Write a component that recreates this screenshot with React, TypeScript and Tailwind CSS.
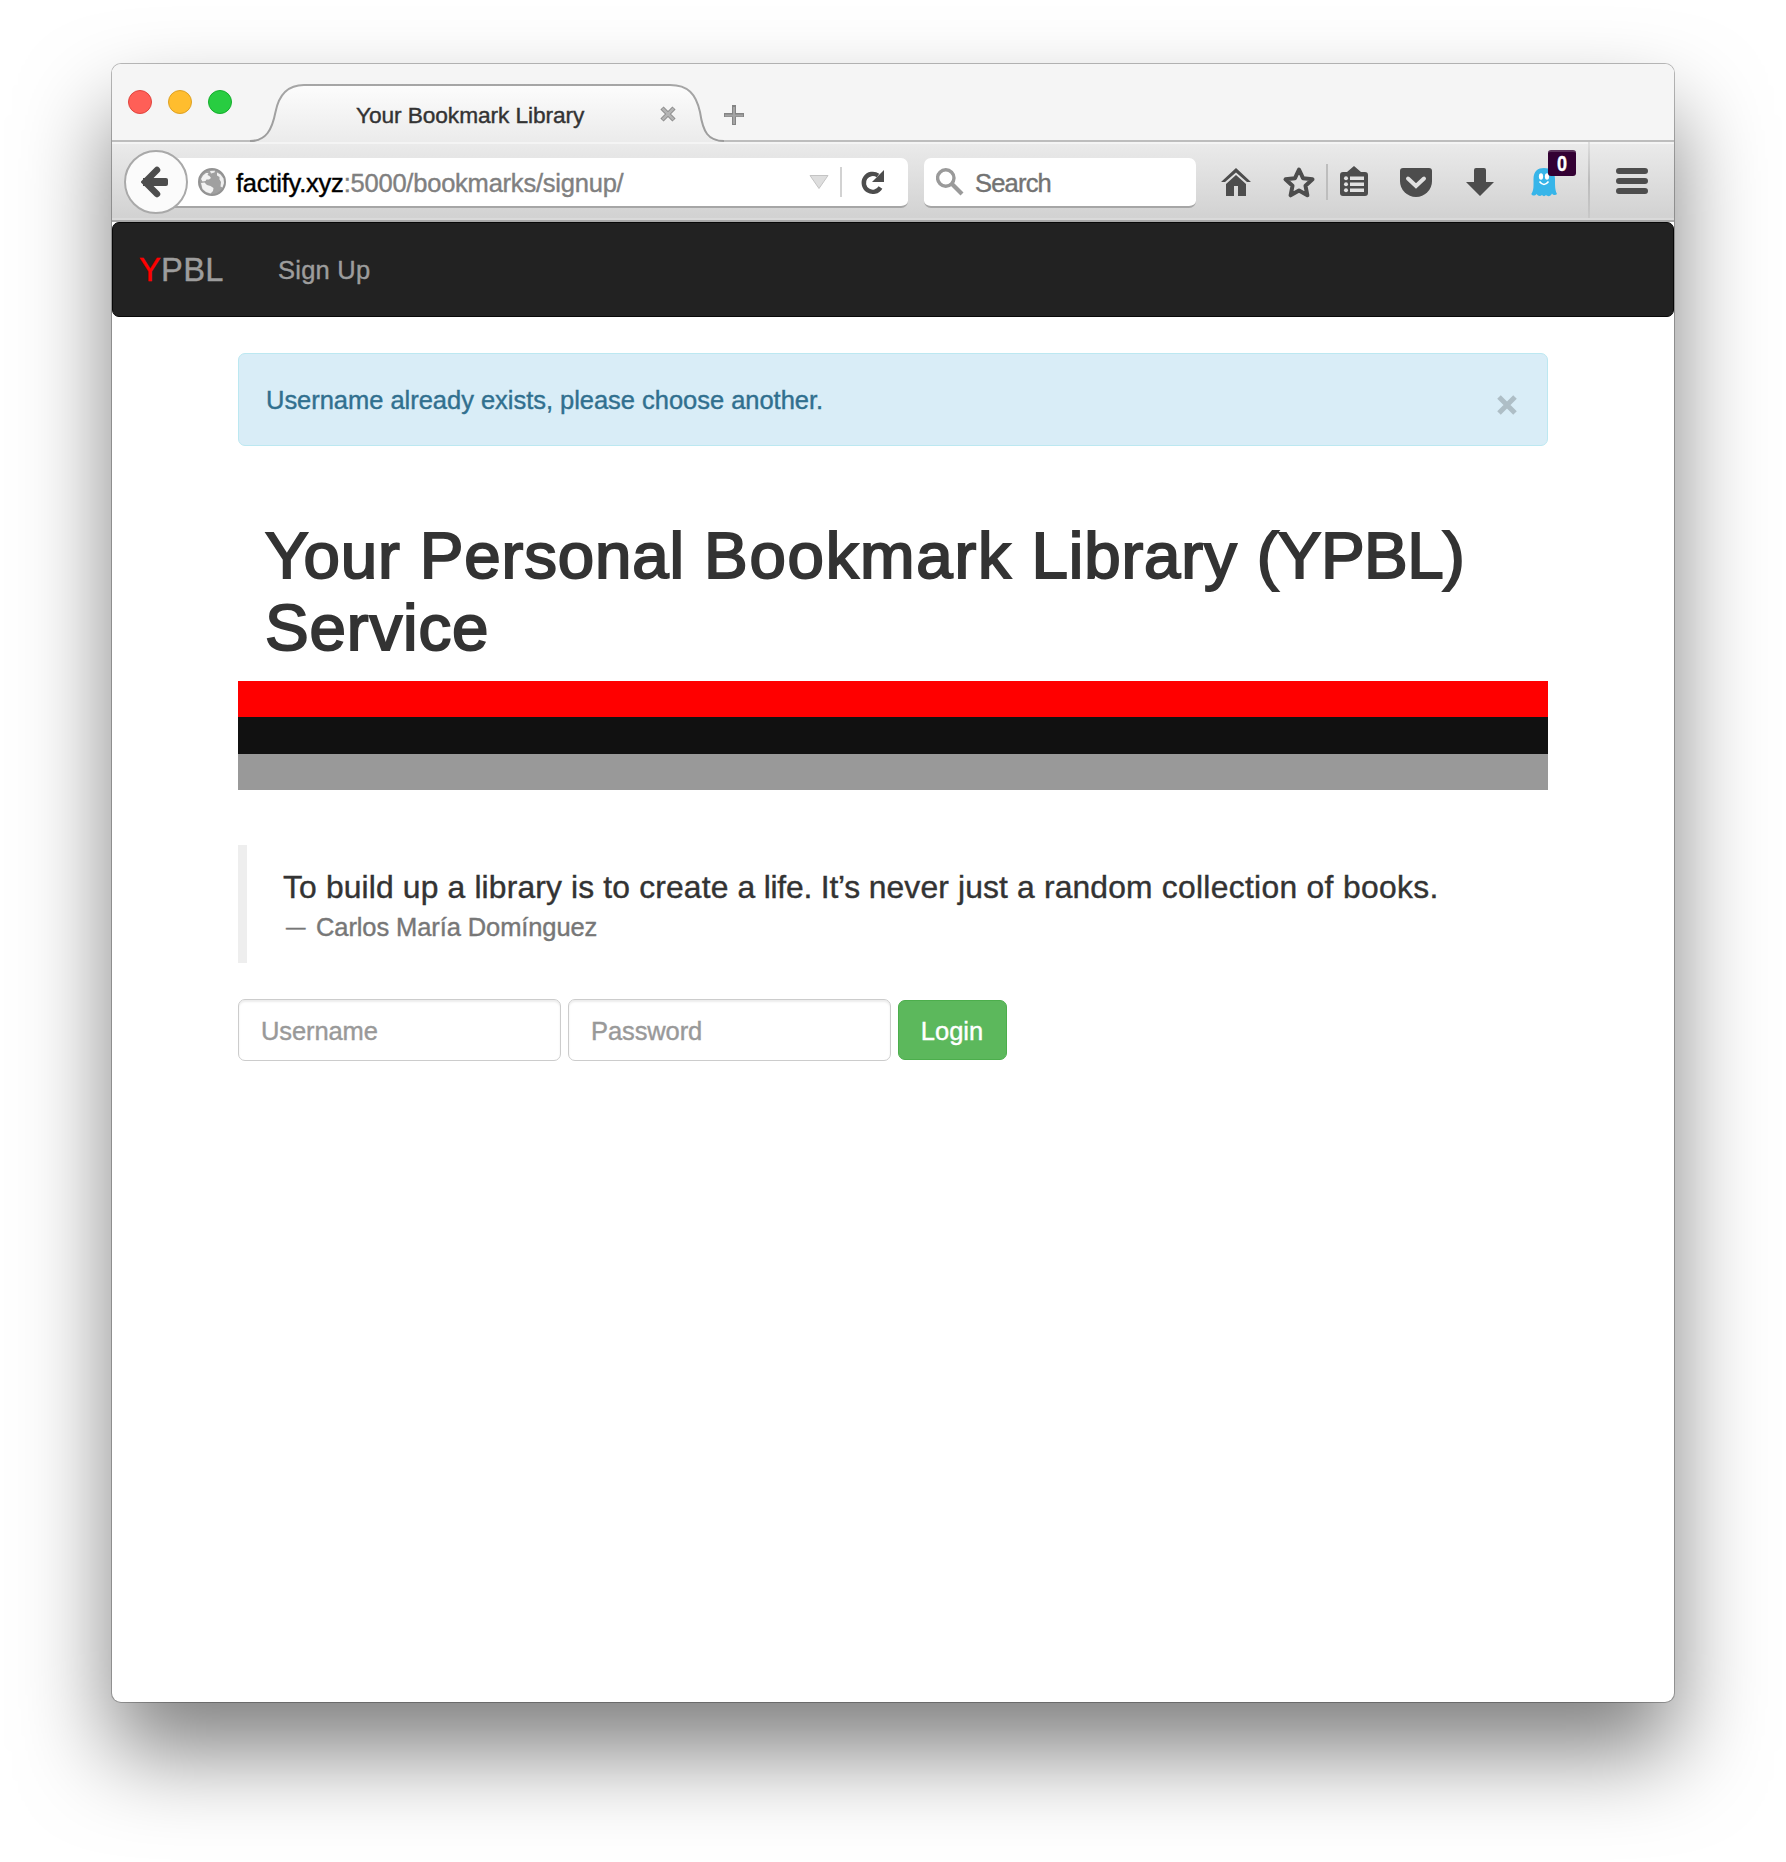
import React from "react";

type GlyphProps = { x: number; w: number; className?: string; children: React.ReactNode };

// Toolbar glyph: a full-height slice of the 80px toolbar, drawn in window coordinates.
function Glyph({ x, w, className = "", children }: GlyphProps) {
  return (
    <svg viewBox={`${x} 142 ${w} 80`} width={w} height={80} className={`block shrink-0 ${className}`}>
      {children}
    </svg>
  );
}

function TabStrip() {
  return (
    <div className="flex h-[78px] shrink-0 bg-[#f5f5f5] bg-[linear-gradient(to_top,#bdbdbd_2px,transparent_2px)]">
      <div className="mt-[26px] ml-4 flex gap-4">
        <span className="size-6 rounded-full border border-[#e0443e] bg-[#ff5f57]" />
        <span className="size-6 rounded-full border border-[#dea123] bg-[#ffbd2e]" />
        <span className="size-6 rounded-full border border-[#14ae2c] bg-[#28cd41]" />
      </div>
      <div className="relative ml-[12px] h-[78px] w-[484px]">
        <svg viewBox="244 64 484 78" width="484" height="78" className="absolute inset-0">
          <defs>
            <linearGradient id="tab" x1="0" y1="84" x2="0" y2="142" gradientUnits="userSpaceOnUse">
              <stop offset="0" stopColor="#fdfdfd" />
              <stop offset="1" stopColor="#ebebeb" />
            </linearGradient>
            <linearGradient id="edge" x1="0" y1="84" x2="0" y2="142" gradientUnits="userSpaceOnUse">
              <stop offset="0" stopColor="#a6a6a6" />
              <stop offset="1" stopColor="#9c9c9c" />
            </linearGradient>
          </defs>
          <path d="M250 142C266 142 273 130 276 112C280 94 288 85 304 85H670C688 85 696 94 700 112C703 132 708 141 724 142Z" fill="url(#tab)" />
          <path d="M250 141C266 141 272 130 275.500 112C279 94 288 85 304 85H670C688 85 696 94 700 112C703 132 708 141 724 141" fill="none" stroke="url(#edge)" strokeWidth="2" />
        </svg>
        <div className="relative flex h-full items-center pt-[25px] pl-[112px]">
          <span className="mb-[2px] w-[228px] text-[22.7px] leading-7 tracking-[-0.08px] whitespace-nowrap text-[#333]">
            Your Bookmark Library
          </span>
          <svg viewBox="0 0 16 16" width="16" height="16" className="mb-1 ml-[76px]">
            <path d="M2 2L14 14M14 2L2 14" stroke="#8a8a8a" strokeWidth="4.500" />
            <path d="M2.500 2.500L13.500 13.500M13.500 2.500L2.500 13.500" stroke="#b4b4b4" strokeWidth="2.500" />
          </svg>
        </div>
      </div>
      <svg viewBox="0 0 20 20" width="20" height="20" className="mt-[41px] ml-[-4px]">
        <path d="M10 0V20M0 10H20" stroke="#848484" strokeWidth="4" />
        <path d="M10 2V19M1 10.500H19" stroke="#a4a4a4" strokeWidth="2" />
      </svg>
    </div>
  );
}

function Toolbar() {
  return (
    <div className="flex h-20 shrink-0 border-b-2 border-[#a9a9a9] bg-linear-to-b from-[#ebebeb] to-[#d1d1d1] shadow-[inset_0_2px_0_#f4f4f4,inset_0_-2px_0_#dadada]">
      <div className="relative z-10 mt-2 ml-3 flex size-16 shrink-0 items-center justify-center rounded-full border-2 border-[#a9a9a9] bg-[#fbfbfb]">
        <svg viewBox="141 166 30 32" width="30" height="32">
          <path d="M143 182H166" stroke="#4d4d4d" strokeWidth="8" />
          <path d="M157 170L145 182L157 194" fill="none" stroke="#4d4d4d" strokeWidth="6.500" strokeLinecap="round" />
          <path d="M164 178H166a2 2 0 0 1 2 2V184a2 2 0 0 1-2 2H164Z" fill="#4d4d4d" />
        </svg>
      </div>
      <div className="mt-4 -ml-[18px] flex h-[50px] w-[738px] shrink-0 items-center rounded-r-[7px] border-b-2 border-[#a6a6a6] bg-white pl-7">
        <svg viewBox="0 0 28 28" width="28" height="28" className="shrink-0">
          <circle cx="14" cy="14" r="13" fill="#a0a0a0" stroke="#939393" strokeWidth="2" />
          <path d="M3 11L5 7.500L8 5L10.500 5L9.500 7L11.500 8L13 10L11 11.500L8.500 11.500L7.500 13L4.500 13.500Z" fill="#f2f2f2" />
          <path d="M12 3L17 2.800L16.500 4.500L13 5.500Z" fill="#ededed" />
          <path d="M3 15L6.500 14.500L9 17L12.500 18L15.500 20L15 23L12.500 25.500L8 24L4.500 21Z" fill="#f2f2f2" />
          <path d="M19 4.500L22.500 6.500L25.500 10.500L26 15L24.500 19.500L22.500 18.500L23 14L21.500 11.500L21.500 9L19 7.500Z" fill="#f0f0f0" />
        </svg>
        <span className="mt-[2px] ml-[10px] w-[388px] text-[25.5px] leading-8 tracking-[-0.22px] whitespace-nowrap text-[#808080]">
          <span className="text-black">factify.xyz</span>:5000/bookmarks/signup/
        </span>
        <svg viewBox="0 0 20 14" width="20" height="14" className="ml-[185px] shrink-0">
          <path d="M1 .5H19L10 13.500Z" fill="#dedede" stroke="#c4c4c4" />
        </svg>
        <span className="ml-[11px] h-[30px] w-[2px] shrink-0 bg-[#d2d2d2]" />
        <svg viewBox="860 168 26 28" width="26" height="28" className="ml-[18px] shrink-0">
          <path d="M880.500 187.500A9 9 0 1 1 878 175.500" fill="none" stroke="#4d4d4d" strokeWidth="4.400" />
          <path d="M884 170V182H872Z" fill="#4d4d4d" />
        </svg>
      </div>
      <div className="mt-4 ml-4 flex h-[50px] w-[272px] shrink-0 items-center rounded-[7px] border-b-2 border-[#a6a6a6] bg-white pl-3">
        <svg viewBox="936 168 28 28" width="28" height="28">
          <circle cx="945.8" cy="178" r="8.200" fill="none" stroke="#9a9a9a" strokeWidth="3.400" />
          <path d="M951.500 183.500L962 194" stroke="#9a9a9a" strokeWidth="4.200" />
        </svg>
        <span className="mt-[2px] ml-[11px] text-[25.5px] leading-8 tracking-[-0.8px] text-[#737373]">Search</span>
      </div>
      <Glyph x={1220} w={32} className="ml-6">
        <path d="M1221 182L1236 168L1251 182H1247L1236 172.500L1225 182Z" fill="#4d4d4d" />
        <path d="M1226 184L1236 175L1246 184V196H1238V186H1234V196H1226Z" fill="#4d4d4d" />
      </Glyph>
      <Glyph x={1282} w={34} className="ml-[30px]">
        <path d="M1299 169.500L1303 178.200L1312.500 179.300L1305.500 185.800L1307.400 195.300L1299 190.500L1290.600 195.300L1292.500 185.800L1285.500 179.300L1295 178.200Z" fill="none" stroke="#4d4d4d" strokeWidth="4" strokeLinejoin="round" />
      </Glyph>
      <span className="mt-[22px] ml-[10px] h-9 w-[2px] shrink-0 bg-[#bdbdbd]" />
      <Glyph x={1340} w={28} className="ml-3">
        <path d="M1347 172L1354 166L1361 172H1365a3 3 0 0 1 3 3V193a3 3 0 0 1-3 3H1343a3 3 0 0 1-3-3V175a3 3 0 0 1 3-3Z" fill="#4d4d4d" />
        <path d="M1350 176.500H1364V180H1350ZM1350 182.500H1364V186H1350ZM1350 188.500H1364V192H1350Z" fill="#e2e2e2" />
        <circle cx="1346" cy="178.300" r="2" fill="#e2e2e2" />
        <circle cx="1346" cy="184.300" r="2" fill="#e2e2e2" />
        <circle cx="1346" cy="190.300" r="2" fill="#e2e2e2" />
      </Glyph>
      <Glyph x={1400} w={32} className="ml-8">
        <path d="M1403 168H1429a3 3 0 0 1 3 3V181a16 16 0 0 1-32 0V171a3 3 0 0 1 3-3Z" fill="#4d4d4d" />
        <path d="M1408 178.500L1416 186L1424 178.500" fill="none" stroke="#e0e0e0" strokeWidth="4" strokeLinecap="round" />
      </Glyph>
      <Glyph x={1466} w={28} className="ml-[34px]">
        <path d="M1476 168H1484a2 2 0 0 1 2 2V182H1494L1480 196L1466 182H1474V170a2 2 0 0 1 2-2Z" fill="#4d4d4d" />
      </Glyph>
      <div className="relative ml-[37px]">
        <Glyph x={1531} w={26}>
          <path d="M1533.500 179C1533.500 171 1538 168 1544 168C1550 168 1555 171 1555 179C1555 186 1555 190 1557 194C1555.500 196 1553 195 1552 193.500C1550.500 197 1547.500 196.500 1546 195C1545 196.500 1543 196.500 1542 195C1540 196.800 1538 196 1536.500 194C1535 196 1532.500 196 1531.300 194C1534 190 1533.500 186 1533.500 179Z" fill="#37b5e9" />
          <ellipse cx="1541" cy="176.500" rx="2.100" ry="3.200" fill="#fff" />
          <ellipse cx="1547" cy="176.500" rx="2.100" ry="3.200" fill="#fff" />
          <path d="M1539.500 181.500Q1544 187.500 1548.500 181.500" fill="none" stroke="#fff" strokeWidth="1.600" />
        </Glyph>
        <span className="absolute top-2 left-[17px] flex h-[26px] w-7 items-center justify-center rounded-[3px] border-t-2 border-[#5b335b] bg-[#330033] pb-px text-[22px] leading-none font-bold text-white">
          <span className="scale-x-[0.82]">0</span>
        </span>
      </div>
      <span className="ml-[31px] h-[76px] w-[2px] shrink-0 bg-linear-to-b from-[#dedede] via-[#bcbcbc] to-[#c8c8c8]" />
      <Glyph x={1616} w={32} className="ml-[26px]">
        <path d="M1619 171H1645M1619 181H1645M1619 191H1645" stroke="#4d4d4d" strokeWidth="6" strokeLinecap="round" />
      </Glyph>
    </div>
  );
}

function Navbar() {
  return (
    <nav className="flex h-[95px] items-center rounded-[7px] border border-[#080808] bg-[#222] pl-[26px] whitespace-nowrap text-[#9d9d9d]">
      <a className="w-[139px] text-[32.7px] leading-9 tracking-[0.3px]">
        <span className="text-[#f00]">Y</span>PBL
      </a>
      <a className="text-[25.5px] leading-9 tracking-[0.25px]">Sign Up</a>
    </nav>
  );
}

const field =
  "h-[62px] w-[323px] rounded-[7px] border border-[#ccc] bg-white px-[22px] pt-[2px] text-[25.5px] tracking-[-0.1px] text-[#555] shadow-[inset_0_2px_2px_rgba(0,0,0,0.075)] placeholder:text-[#999] placeholder:opacity-100";

export default function App() {
  return (
    <div className="h-[1862px] w-[1786px] overflow-hidden bg-white pt-16 pl-28 font-['Liberation_Sans',Arial,sans-serif] [-webkit-text-stroke-width:0.4px]">
      <div className="flex h-[1638px] w-[1562px] flex-col overflow-hidden rounded-[9px] bg-white shadow-[0_0_0_1px_rgba(0,0,0,0.26),0_50px_90px_rgba(0,0,0,0.5)]">
        <TabStrip />
        <Toolbar />
        <Navbar />
        <main className="mx-[126px] text-[#333]">
          <div className="mt-9 flex h-[93px] items-center justify-between rounded-[7px] border border-[#bce8f1] bg-[#d9edf7] pr-[30px] pl-[27px] text-[#31708f]">
            <span className="text-[25.5px] leading-9 tracking-[-0.03px] whitespace-nowrap">
              Username already exists, please choose another.
            </span>
            <svg viewBox="0 0 20 20" width="20" height="20" className="mt-[11px]">
              <path d="M2 2L18 18M18 2L2 18" stroke="#aebec6" strokeWidth="5" />
            </svg>
          </div>
          <h1 className="mt-[74px] ml-[27px] text-[65.5px] leading-[72px] tracking-[0.84px] whitespace-nowrap [-webkit-text-stroke-width:2px]">
            Your Personal <span className="tracking-[1.7px]">Bookmark</span> Library{" "}
            <span className="tracking-[-0.6px]">(YPBL)</span>
            <br />
            Service
          </h1>
          <div className="mt-[17px]">
            <div className="h-9 bg-[#f00]" />
            <div className="h-[37px] bg-[#111]" />
            <div className="h-9 bg-[#999]" />
          </div>
          <blockquote className="mt-[55px] h-[118px] border-l-[9px] border-[#eee] pt-[20px] pl-9 whitespace-nowrap">
            <p className="text-[31.8px] leading-[44px] tracking-[0.16px]">
              To build up a library is to create <span className="tracking-[-0.2px]">a life. It’s </span>
              never just a random <span className="tracking-[0.32px]">collection of books.</span>
            </p>
            <footer className="flex text-[25.5px] leading-9 tracking-[-0.1px] text-[#777]">
              <span className="w-[33px] pl-[3px] text-[19.5px]">—</span>Carlos María Domínguez
            </footer>
          </blockquote>
          <form className="mt-9 flex items-center gap-[7px]">
            <input className={field} placeholder="Username" />
            <input className={field} type="password" placeholder="Password" />
            <button type="button" className="h-[60px] w-[109px] rounded-[7px] border border-[#4cae4c] bg-[#5cb85c] pt-[2px] pr-px text-[25.5px] text-white">
              Login
            </button>
          </form>
        </main>
      </div>
    </div>
  );
}
